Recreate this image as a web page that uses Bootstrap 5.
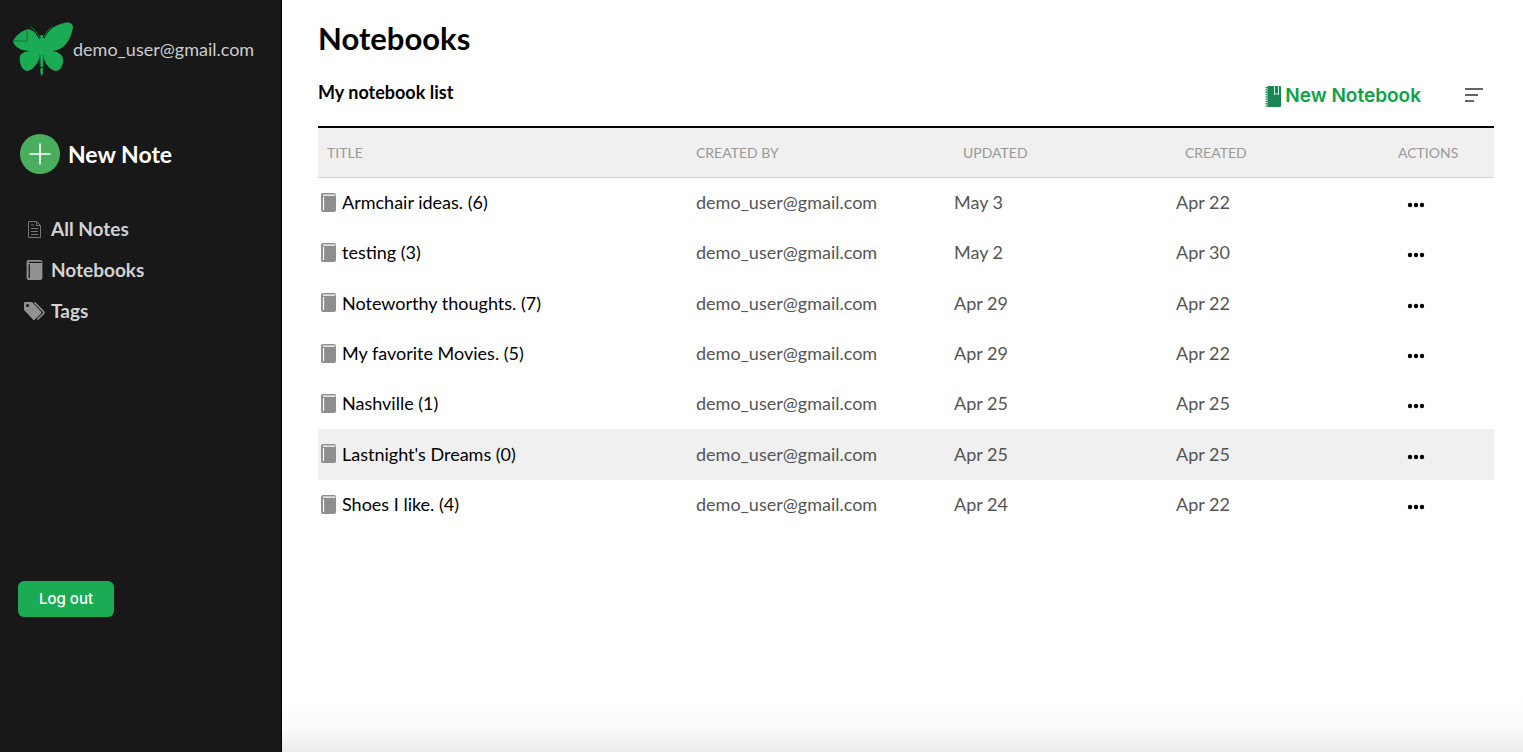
<!DOCTYPE html>
<html lang="en">
<head>
<meta charset="utf-8">
<meta name="viewport" content="width=device-width, initial-scale=1">
<title>Notebooks</title>
<link href="https://cdn.jsdelivr.net/npm/bootstrap@5.3.0/dist/css/bootstrap.min.css" rel="stylesheet">
<style>
body { font-family: Lato, "Open Sans", sans-serif; font-size: 18px; line-height: 24px; color: #000; background: #fff; }
.side { width: 282px; background: #181818; border-right: 1px solid #000; padding: 22px 12px 0 13px; }
.user { color: #ccc; font-size: 18px; }
.new-note { color: #fff; font-size: 23px; font-weight: 700; margin: 58px 0 0 7px; gap: 8px; }
.side-nav { margin: 43px 0 0 10px; gap: 17px; }
.side-nav a { color: #d2d2d2; font-size: 19px; font-weight: 700; gap: 5px; }
.side-nav svg { width: 23px; height: 20px; color: #919191; }
.logout { background: #1aab54; color: #fff; font-family: Inter, sans-serif; font-size: 15px; font-weight: 500; width: 96px; height: 36px; padding: 0; border: 0; border-radius: 6px; margin: 258px 0 0 5px; }
.logout:hover { background: #15914a; color: #fff; }
main { min-width: 0; padding: 20px 29px 0 36px; background: linear-gradient(to top, #ebebeb, #fafafa 24px, #fff 56px); }
h1 { font-size: 31px; line-height: 36px; font-weight: 700; margin: 0; }
.tools { height: 70px; }
h2 { font-size: 18px; line-height: 24px; font-weight: 700; margin: 24px 0 0; }
.new-book { color: #0aa344; font-family: Inter, sans-serif; font-size: 19px; line-height: 24px; font-weight: 600; gap: 4px; }
.actions { gap: 43px; margin: 28px 11px 0 0; }
.plain { border: 0; padding: 0; background: none; }
.books { table-layout: fixed; width: 100%; border-collapse: separate; border-spacing: 0; border-top: 2px solid #000; }
.books th { height: 50px; background: #f0f0f0; border-bottom: 1px solid #d2d2d2; color: #999; font-size: 14px; font-weight: 400; text-transform: uppercase; padding: 0; }
.books th:first-child, .books th:nth-child(3), .books th:nth-child(4) { padding-left: 9px; }
.books td { height: 50px; padding: 0 0 2px; color: #555; }
.books tr:nth-child(3n) td { height: 51px; }
.books td:first-child { padding-left: 3px; }
.books td:last-child { padding: 4px 0 0 9px; }
.books a { color: #000; gap: 6px; }
.books .picked td { background: #f0f0f0; }
.c-by { width: 258px; } .c-date { width: 222px; } .c-act { width: 96px; }
.book-ico { width: 15px; height: 19px; color: #8e8e8e; }
</style>
</head>
<body>
<svg class="d-none">
  <symbol id="book" viewBox="0 0 15 19"><rect width="15" height="19" rx="2" fill="currentColor"/><path d="M2 2.2H14.2M2.5 4V17" stroke="var(--gap, #fff)" stroke-width="1.2" fill="none"/></symbol>
  <symbol id="dots" viewBox="0 0 18 6"><circle cx="3" cy="3" r="2.2"/><circle cx="9" cy="3" r="2.2"/><circle cx="15" cy="3" r="2.2"/></symbol>
</svg>
<div class="d-flex min-vh-100">
  <aside class="side flex-shrink-0">
    <div class="d-flex align-items-center">
      <svg width="60" height="54" viewBox="24 20 183 162" preserveAspectRatio="none" aria-hidden="true">
        <g fill="#1aab54">
          <path d="M110 76C122 50 152 28 180 23C196 19 207 24 207 36C203 62 190 88 170 99C163 104 156 106 146 107C166 111 178 121 177 137C175 154 168 166 155 167C138 165 123 148 115 122H107C99 148 83 166 66 167C50 164 42 142 45 122C51 112 64 108 77 107C53 108 27 96 24 78C31 62 50 47 69 41C86 44 104 58 110 76Z"/>
          <path d="M106 64q5-11 11 0l-1 30q3 10 1 24l-2 37h-7l-2-37q-2-14 1-24zM107 159h9l-1 15q-4 14-7 0z"/>
        </g>
        <path d="M67 42V77H26M106 118V156M117 118V156" fill="none" stroke="#12572f" stroke-width="2"/>
        <path d="M106 68Q94 47 78 35M117 68Q127 47 143 35" fill="none" stroke="#181818" stroke-width="6"/>
        <path d="M106 66Q94 45 78 34M117 66Q127 45 143 34" fill="none" stroke="#168543" stroke-width="3"/>
      </svg>
      <span class="user">demo_user@gmail.com</span>
    </div>
    <button class="new-note plain d-flex align-items-center">
      <svg width="40" height="40" viewBox="0 0 40 40" aria-hidden="true"><circle cx="20" cy="20" r="20" fill="#49ae5e"/><path d="M9.500 20H30.500M20 9.500V30.500" stroke="#fff" stroke-width="1.700"/></svg>
      New Note
    </button>
    <nav class="side-nav d-flex flex-column">
      <a href="#" class="d-flex align-items-center text-decoration-none"><svg viewBox="0 0 23 20" fill="none" stroke="#777" stroke-width="1" aria-hidden="true"><path d="M5.500 2.500h8l4 4v12h-12zM13.500 2.500v4h4M8 6h3M8 9.500h7M8 12.500h7M8 15.500h7"/></svg>All Notes</a>
      <a href="#" class="d-flex align-items-center text-decoration-none"><svg style="--gap:#181818" aria-hidden="true"><use href="#book" x="0" y="0" width="23" height="20"/></svg>Notebooks</a>
      <a href="#" class="d-flex align-items-center text-decoration-none"><svg viewBox="0 0 23 20" aria-hidden="true"><path d="M1 2Q1 1 2 1H9L18 10.500Q19 11.500 18 12.500L12 18.500Q11 19.500 10 18.500L1 9Z" fill="currentColor"/><circle cx="4.500" cy="4.500" r="1.500" fill="#181818"/><path d="M11.500 1.500L20.500 10.500Q21.500 11.500 20.500 12.500L14.500 18.500" fill="none" stroke="currentColor" stroke-width="1.700"/></svg>Tags</a>
    </nav>
    <button class="btn logout">Log out</button>
  </aside>
  <main class="flex-grow-1">
    <h1>Notebooks</h1>
    <div class="tools d-flex justify-content-between align-items-start">
      <h2>My notebook list</h2>
      <div class="actions d-flex align-items-center">
        <button class="new-book plain d-flex align-items-center">
          <svg width="16" height="21" viewBox="0 0 16 21" aria-hidden="true"><path d="M2.500 0H15q1 0 1 1V20q0 1-1 1H2.500z" fill="#198754"/><path d="M1.500 1V21" stroke="#198754" stroke-width="2" stroke-dasharray="1.300 1"/><path d="M9.500 0V9L11.500 7L13.500 9V0" fill="none" stroke="#d5eadf" stroke-width="1"/></svg>
          New Notebook
        </button>
        <button class="plain d-flex" aria-label="Sort"><svg width="19" height="16" viewBox="0 0 19 16" stroke="#333" stroke-width="1.400" aria-hidden="true"><path d="M1 1H19M1 7H14M1 13H10"/></svg></button>
      </div>
    </div>
    <table class="books">
      <colgroup><col><col class="c-by"><col class="c-date"><col class="c-date"><col class="c-act"></colgroup>
      <thead><tr><th>Title</th><th>Created by</th><th>Updated</th><th>Created</th><th>Actions</th></tr></thead>
      <tbody>
        <tr><td><a href="#" class="d-flex align-items-center text-decoration-none"><svg class="book-ico" aria-hidden="true"><use href="#book"/></svg>Armchair ideas. (6)</a></td><td>demo_user@gmail.com</td><td>May 3</td><td>Apr 22</td><td><button class="plain d-flex" aria-label="Actions"><svg width="18" height="6"><use href="#dots"/></svg></button></td></tr>
        <tr><td><a href="#" class="d-flex align-items-center text-decoration-none"><svg class="book-ico" aria-hidden="true"><use href="#book"/></svg>testing (3)</a></td><td>demo_user@gmail.com</td><td>May 2</td><td>Apr 30</td><td><button class="plain d-flex" aria-label="Actions"><svg width="18" height="6"><use href="#dots"/></svg></button></td></tr>
        <tr><td><a href="#" class="d-flex align-items-center text-decoration-none"><svg class="book-ico" aria-hidden="true"><use href="#book"/></svg>Noteworthy thoughts. (7)</a></td><td>demo_user@gmail.com</td><td>Apr 29</td><td>Apr 22</td><td><button class="plain d-flex" aria-label="Actions"><svg width="18" height="6"><use href="#dots"/></svg></button></td></tr>
        <tr><td><a href="#" class="d-flex align-items-center text-decoration-none"><svg class="book-ico" aria-hidden="true"><use href="#book"/></svg>My favorite Movies. (5)</a></td><td>demo_user@gmail.com</td><td>Apr 29</td><td>Apr 22</td><td><button class="plain d-flex" aria-label="Actions"><svg width="18" height="6"><use href="#dots"/></svg></button></td></tr>
        <tr><td><a href="#" class="d-flex align-items-center text-decoration-none"><svg class="book-ico" aria-hidden="true"><use href="#book"/></svg>Nashville (1)</a></td><td>demo_user@gmail.com</td><td>Apr 25</td><td>Apr 25</td><td><button class="plain d-flex" aria-label="Actions"><svg width="18" height="6"><use href="#dots"/></svg></button></td></tr>
        <tr class="picked"><td><a href="#" class="d-flex align-items-center text-decoration-none"><svg class="book-ico" aria-hidden="true"><use href="#book"/></svg>Lastnight's Dreams (0)</a></td><td>demo_user@gmail.com</td><td>Apr 25</td><td>Apr 25</td><td><button class="plain d-flex" aria-label="Actions"><svg width="18" height="6"><use href="#dots"/></svg></button></td></tr>
        <tr><td><a href="#" class="d-flex align-items-center text-decoration-none"><svg class="book-ico" aria-hidden="true"><use href="#book"/></svg>Shoes I like. (4)</a></td><td>demo_user@gmail.com</td><td>Apr 24</td><td>Apr 22</td><td><button class="plain d-flex" aria-label="Actions"><svg width="18" height="6"><use href="#dots"/></svg></button></td></tr>
      </tbody>
    </table>
  </main>
</div>
<script src="https://cdn.jsdelivr.net/npm/bootstrap@5.3.0/dist/js/bootstrap.bundle.min.js"></script>
</body>
</html>
